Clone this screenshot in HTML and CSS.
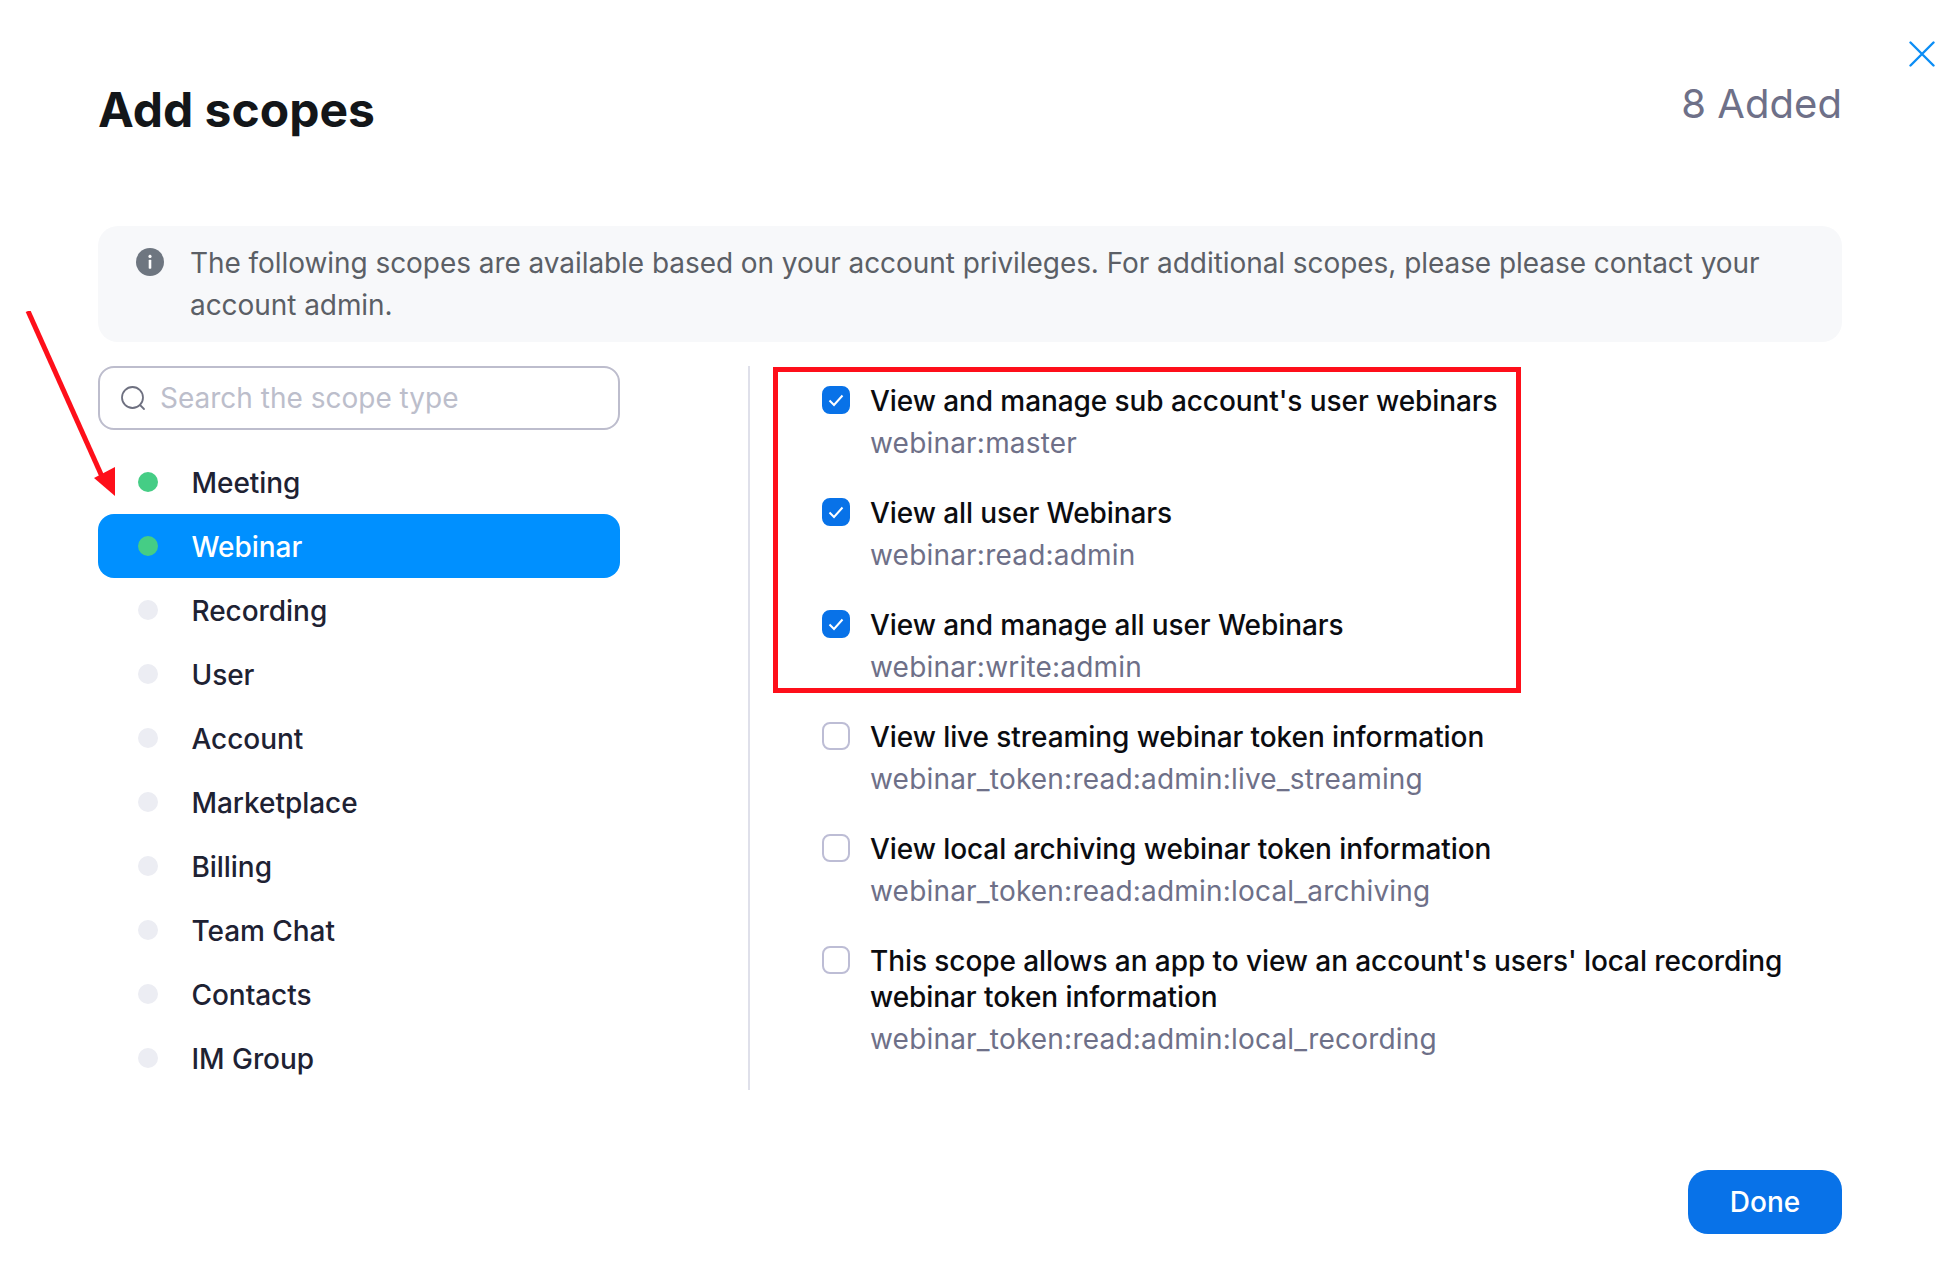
FILE: index.html
```html
<!DOCTYPE html>
<html lang="en">
<head>
<meta charset="utf-8">
<title>Add scopes</title>
<link rel="stylesheet" href="styles.css">
</head>
<body>
<div class="modal">
  <button class="close" aria-label="Close"><svg width="26" height="26" viewBox="0 0 26 26"><path d="M1.5 1.5L24.5 24.5M24.5 1.5L1.5 24.5" stroke="#0b8df5" stroke-width="2.4" stroke-linecap="round" fill="none"/></svg></button>
  <header class="head">
    <h1 class="title">Add scopes</h1>
    <div class="count">8 Added</div>
  </header>
  <div class="notice">
    <svg class="info" width="28" height="28" viewBox="0 0 28 28"><circle cx="14" cy="14" r="14" fill="#6e7680"/><circle cx="14" cy="8.4" r="1.6" fill="#fff"/><rect x="12.7" y="11.8" width="2.6" height="9" rx=".8" fill="#fff"/></svg>
    <p class="notice-text">The following scopes are available based on your account privileges. For additional scopes, please please contact your account admin.</p>
  </div>
  <div class="columns">
    <aside class="side">
      <div class="search">
        <svg width="26" height="26" viewBox="0 0 26 26"><circle cx="12.5" cy="12.5" r="10.5" stroke="#6e7080" stroke-width="1.8" fill="none"/><path d="M20 20L24 24" stroke="#6e7080" stroke-width="1.8" stroke-linecap="round"/></svg>
        <span class="placeholder">Search the scope type</span>
      </div>
      <ul class="menu">
        <li class="item"><span class="dot on"></span>Meeting</li>
        <li class="item active"><span class="dot on"></span>Webinar</li>
        <li class="item"><span class="dot"></span>Recording</li>
        <li class="item"><span class="dot"></span>User</li>
        <li class="item"><span class="dot"></span>Account</li>
        <li class="item"><span class="dot"></span>Marketplace</li>
        <li class="item"><span class="dot"></span>Billing</li>
        <li class="item"><span class="dot"></span>Team Chat</li>
        <li class="item"><span class="dot"></span>Contacts</li>
        <li class="item"><span class="dot"></span>IM Group</li>
      </ul>
    </aside>
    <section class="scopes">
      <div class="scope"><span class="box checked"><svg width="20" height="20" viewBox="0 0 20 20"><path d="M3.5 10.5L8 15L16.5 5.5" stroke="#fff" stroke-width="2" fill="none"/></svg></span><div><div class="name">View and manage sub account's user webinars</div><div class="code">webinar:master</div></div></div>
      <div class="scope"><span class="box checked"><svg width="20" height="20" viewBox="0 0 20 20"><path d="M3.5 10.5L8 15L16.5 5.5" stroke="#fff" stroke-width="2" fill="none"/></svg></span><div><div class="name">View all user Webinars</div><div class="code">webinar:read:admin</div></div></div>
      <div class="scope"><span class="box checked"><svg width="20" height="20" viewBox="0 0 20 20"><path d="M3.5 10.5L8 15L16.5 5.5" stroke="#fff" stroke-width="2" fill="none"/></svg></span><div><div class="name">View and manage all user Webinars</div><div class="code">webinar:write:admin</div></div></div>
      <div class="scope"><span class="box"></span><div><div class="name">View live streaming webinar token information</div><div class="code">webinar_token:read:admin:live_streaming</div></div></div>
      <div class="scope"><span class="box"></span><div><div class="name">View local archiving webinar token information</div><div class="code">webinar_token:read:admin:local_archiving</div></div></div>
      <div class="scope"><span class="box"></span><div><div class="name">This scope allows an app to view an account's users' local recording webinar token information</div><div class="code">webinar_token:read:admin:local_recording</div></div></div>
    </section>
  </div>
  <footer class="foot"><button class="done">Done</button></footer>
  <div class="highlight"></div>
  <svg class="arrow" width="130" height="200" viewBox="0 0 130 200"><path d="M28 0L104 170" stroke="#fe0f1a" stroke-width="5" fill="none"/><path d="M115 185L94 167L115 156Z" fill="#fe0f1a"/></svg>
</div>
</body>
</html>
```
FILE: styles.css
```css
* { box-sizing: border-box; }
html, body { margin: 0; background: #fff; }
body { font-family: Inter, "Liberation Sans", sans-serif; }
.modal { position: relative; width: 1956px; height: 1288px; padding: 0 114px 0 98px; overflow: hidden; }
.close { position: absolute; left: 1909px; top: 41px; width: 26px; height: 26px; padding: 0; border: 0; background: none; display: flex; }
.head { display: flex; justify-content: space-between; align-items: flex-start; height: 226px; padding-top: 79px; }
.title { margin: 0; font-size: 48px; line-height: 62px; font-weight: 700; color: #131619; }
.count { margin-top: -1px; font-size: 40px; line-height: 52px; color: #6e7088; letter-spacing: .05px; }
.notice { display: flex; gap: 26px; height: 116px; padding: 16px 40px 0 38px; background: #f7f8fa; border-radius: 20px; }
.info { flex: none; margin-top: 6px; }
.notice-text { margin: 0; font-size: 28px; line-height: 42px; color: #5b5f66; letter-spacing: -.06px; }
.columns { display: flex; height: 724px; margin-top: 24px; }
.side { width: 652px; padding-right: 128px; border-right: 2px solid #dfe0ea; }
.search { display: flex; align-items: center; gap: 14px; height: 64px; padding-left: 20px; border: 2px solid #bdbdcd; border-radius: 16px; }
.placeholder { font-size: 28px; color: #bcbecb; }
.menu { list-style: none; margin: 20px 0 0; padding: 0; }
.item { display: flex; align-items: center; height: 64px; padding: 1px 0 0 40px; border-radius: 16px; font-size: 28px; font-weight: 500; color: #1e2233; letter-spacing: -.05px; }
.item.active { background: #0090ff; color: #fff; }
.dot { width: 20px; height: 20px; margin: -1px 33.5px 0 0; border-radius: 50%; background: #ecedf3; }
.dot.on { background: #45cd85; }
.scopes { flex: 1; padding: 9px 0 0 72px; }
.scope { display: flex; gap: 20px; margin-bottom: 26px; }
.box { flex: none; display: flex; align-items: center; justify-content: center; width: 28px; height: 28px; margin-top: 11px; border: 2px solid #bdbdd5; border-radius: 8px; }
.box.checked { background: #0872e8; border-color: #0872e8; }
.name { font-size: 28px; line-height: 36px; font-weight: 500; color: #0b0c10; padding-top: 8px; letter-spacing: -.08px; }
.code { margin-top: 6px; font-size: 28px; line-height: 36px; color: #6e7088; letter-spacing: .2px; }
.foot { display: flex; justify-content: flex-end; margin-top: 80px; }
.done { width: 154px; height: 64px; border: 0; border-radius: 20px; background: #0872e8; color: #fff; font: 500 28px Inter, sans-serif; }
.highlight { position: absolute; left: 773px; top: 367px; width: 748px; height: 326px; border: 5px solid #fe0f1a; }
.arrow { position: absolute; left: 0; top: 311px; }
```
